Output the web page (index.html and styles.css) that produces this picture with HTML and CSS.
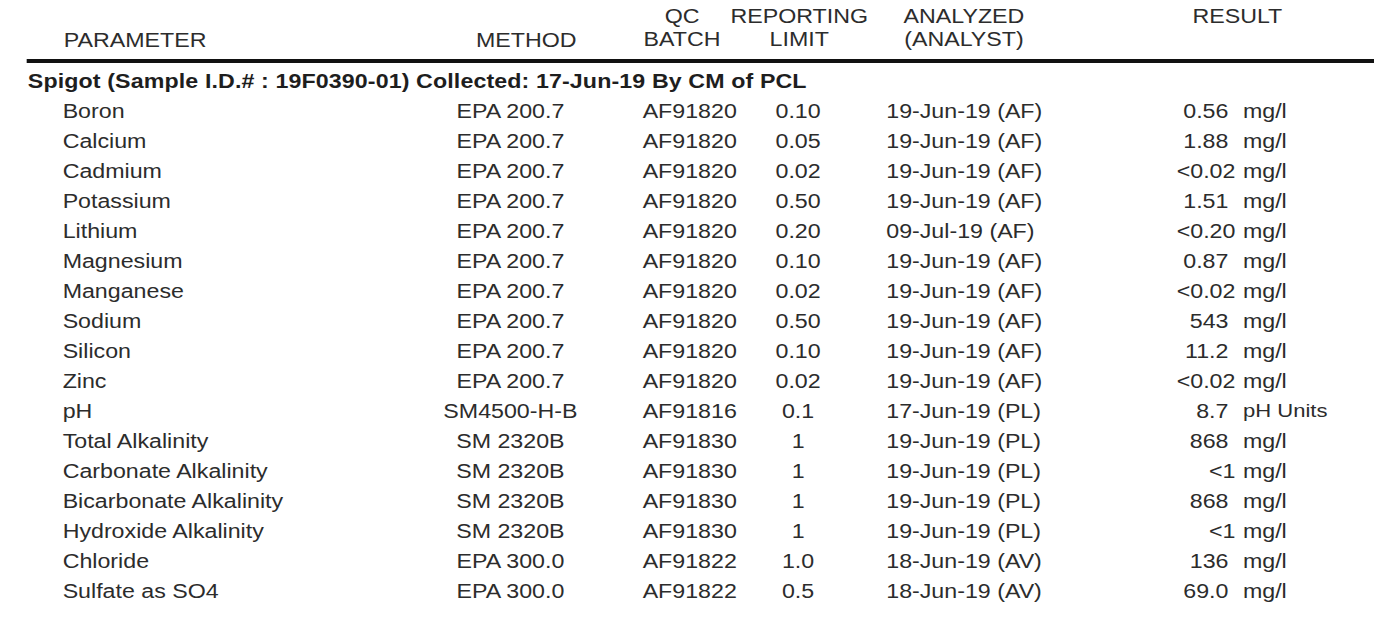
FILE: index.html
```html
<!DOCTYPE html>
<html lang="en">
<head>
<meta charset="utf-8">
<title>Sample Results</title>
<link rel="stylesheet" href="styles.css">
</head>
<body>
<div class="sheet">
  <div class="head">
    <div class="h h-param">PARAMETER</div>
    <div class="h h-method">METHOD</div>
    <div class="h h-center"><span>QC</span><span>BATCH</span></div>
    <div class="h h-center"><span>REPORTING</span><span>LIMIT</span></div>
    <div class="h h-center"><span>ANALYZED</span><span>(ANALYST)</span></div>
    <div class="h h-result">RESULT</div>
  </div>
  <div class="rule"></div>
  <div class="sample">Spigot (Sample I.D.# : 19F0390-01) Collected: 17-Jun-19 By CM of PCL</div>

  <div class="row"><span class="p">Boron</span><span class="m">EPA 200.7</span><span class="b">AF91820</span><span class="l">0.10</span><span class="a">19-Jun-19 (AF)</span><span class="n">0.56</span><span class="u">mg/l</span></div>
  <div class="row"><span class="p">Calcium</span><span class="m">EPA 200.7</span><span class="b">AF91820</span><span class="l">0.05</span><span class="a">19-Jun-19 (AF)</span><span class="n">1.88</span><span class="u">mg/l</span></div>
  <div class="row"><span class="p">Cadmium</span><span class="m">EPA 200.7</span><span class="b">AF91820</span><span class="l">0.02</span><span class="a">19-Jun-19 (AF)</span><span class="n lt">&lt;0.02</span><span class="u">mg/l</span></div>
  <div class="row"><span class="p">Potassium</span><span class="m">EPA 200.7</span><span class="b">AF91820</span><span class="l">0.50</span><span class="a">19-Jun-19 (AF)</span><span class="n">1.51</span><span class="u">mg/l</span></div>
  <div class="row"><span class="p">Lithium</span><span class="m">EPA 200.7</span><span class="b">AF91820</span><span class="l">0.20</span><span class="a">09-Jul-19 (AF)</span><span class="n lt">&lt;0.20</span><span class="u">mg/l</span></div>
  <div class="row"><span class="p">Magnesium</span><span class="m">EPA 200.7</span><span class="b">AF91820</span><span class="l">0.10</span><span class="a">19-Jun-19 (AF)</span><span class="n">0.87</span><span class="u">mg/l</span></div>
  <div class="row"><span class="p">Manganese</span><span class="m">EPA 200.7</span><span class="b">AF91820</span><span class="l">0.02</span><span class="a">19-Jun-19 (AF)</span><span class="n lt">&lt;0.02</span><span class="u">mg/l</span></div>
  <div class="row"><span class="p">Sodium</span><span class="m">EPA 200.7</span><span class="b">AF91820</span><span class="l">0.50</span><span class="a">19-Jun-19 (AF)</span><span class="n">543</span><span class="u">mg/l</span></div>
  <div class="row"><span class="p">Silicon</span><span class="m">EPA 200.7</span><span class="b">AF91820</span><span class="l">0.10</span><span class="a">19-Jun-19 (AF)</span><span class="n">11.2</span><span class="u">mg/l</span></div>
  <div class="row"><span class="p">Zinc</span><span class="m">EPA 200.7</span><span class="b">AF91820</span><span class="l">0.02</span><span class="a">19-Jun-19 (AF)</span><span class="n lt">&lt;0.02</span><span class="u">mg/l</span></div>
  <div class="row"><span class="p">pH</span><span class="m">SM4500-H-B</span><span class="b">AF91816</span><span class="l">0.1</span><span class="a">17-Jun-19 (PL)</span><span class="n">8.7</span><span class="u small">pH Units</span></div>
  <div class="row"><span class="p">Total Alkalinity</span><span class="m">SM 2320B</span><span class="b">AF91830</span><span class="l">1</span><span class="a">19-Jun-19 (PL)</span><span class="n">868</span><span class="u">mg/l</span></div>
  <div class="row"><span class="p">Carbonate Alkalinity</span><span class="m">SM 2320B</span><span class="b">AF91830</span><span class="l">1</span><span class="a">19-Jun-19 (PL)</span><span class="n lt">&lt;1</span><span class="u">mg/l</span></div>
  <div class="row"><span class="p">Bicarbonate Alkalinity</span><span class="m">SM 2320B</span><span class="b">AF91830</span><span class="l">1</span><span class="a">19-Jun-19 (PL)</span><span class="n">868</span><span class="u">mg/l</span></div>
  <div class="row"><span class="p">Hydroxide Alkalinity</span><span class="m">SM 2320B</span><span class="b">AF91830</span><span class="l">1</span><span class="a">19-Jun-19 (PL)</span><span class="n lt">&lt;1</span><span class="u">mg/l</span></div>
  <div class="row"><span class="p">Chloride</span><span class="m">EPA 300.0</span><span class="b">AF91822</span><span class="l">1.0</span><span class="a">18-Jun-19 (AV)</span><span class="n">136</span><span class="u">mg/l</span></div>
  <div class="row"><span class="p">Sulfate as SO4</span><span class="m">EPA 300.0</span><span class="b">AF91822</span><span class="l">0.5</span><span class="a">18-Jun-19 (AV)</span><span class="n">69.0</span><span class="u">mg/l</span></div>
</div>
</body>
</html>
```
FILE: styles.css
```css
html, body {
  margin: 0;
  background: #ffffff;
}

/* the scanned sheet is slightly stretched horizontally */
.sheet {
  width: 1184.5px;
  padding-top: 5px;
  transform: scaleX(1.16);
  transform-origin: 0 0;
  font-family: "Liberation Sans", Arial, sans-serif;
  font-size: 20px;
  color: #2c2c2c;
}

.head {
  display: grid;
  grid-template-columns: 420px 120px 96px 106px 178px 1fr;
  height: 47px;
  line-height: 23px;
}

.h {
  display: flex;
  flex-direction: column;
  white-space: nowrap;
}

.h-param {
  justify-content: flex-end;
  padding-left: 55px;
}

.h-method {
  justify-content: flex-end;
  align-items: flex-end;
  padding-right: 43px;
}

.h-center {
  align-items: center;
  justify-content: flex-start;
}

.h-result {
  justify-content: flex-start;
  padding-left: 108px;
}

.rule {
  height: 4px;
  margin: 7px 0 0 23px;
  background: #111111;
}

.sample {
  margin: 3px 0 0 24px;
  line-height: 30px;
  font-weight: bold;
  letter-spacing: 0.1px;
  color: #1e1e1e;
  white-space: nowrap;
}

.row {
  display: grid;
  grid-template-columns: 380px 120px 140px 96px 264px 65px 1fr;
  line-height: 30px;
  white-space: nowrap;
}

.p {
  padding-left: 54px;
}

.m {
  text-align: center;
}

.b {
  padding-left: 54px;
}

.l {
  text-align: center;
}

.a {
  padding-left: 28px;
}

.n {
  text-align: right;
  padding-right: 6px;
}

.n.lt {
  padding-right: 0;
}

.u {
  padding-left: 6.5px;
}

.u.small {
  font-size: 19px;
}
```
